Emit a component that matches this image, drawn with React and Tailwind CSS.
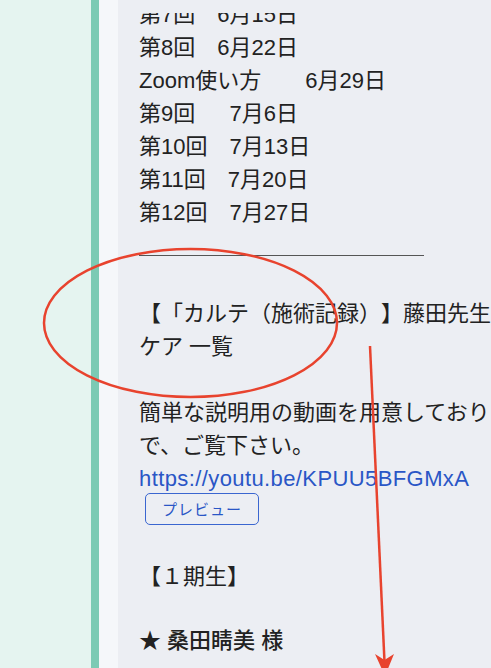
import React from "react";

const FONT = { fontFamily: '"Liberation Sans", "Noto Sans CJK JP", sans-serif' };

const schedule = [
  "第7回　6月15日",
  "第8回　6月22日",
  "Zoom使い方　　6月29日",
  "第9回　  7月6日",
  "第10回　7月13日",
  "第11回　7月20日",
  "第12回　7月27日",
];

const Line = ({ children, className = "" }) => (
  <div className={"h-[33px] whitespace-pre " + className}>{children}</div>
);

// red marker drawn on top of the screenshot
const Annotation = () => (
  <svg
    className="absolute inset-0 pointer-events-none"
    width="491"
    height="668"
    viewBox="0 0 491 668"
  >
    <ellipse cx="190.5" cy="323" rx="146.5" ry="74" fill="none" stroke="#e8432e" strokeWidth="2.5" />
    <line x1="370" y1="346" x2="384.5" y2="662" stroke="#e8432e" strokeWidth="2.5" />
    <polygon points="375,654 384.5,660 394,654 385,676" fill="#e8432e" />
  </svg>
);

export default function App() {
  return (
    <div className="relative w-[491px] h-[668px] overflow-hidden flex bg-[#e5f4f0]" style={FONT}>
      <div className="w-[91px] shrink-0 bg-[#e5f4f0]" />
      <div className="w-[8px] shrink-0 bg-[#7ccab4]" />
      <div className="w-[19px] shrink-0 bg-[#f5f7fa]" />
      <div className="flex-1 bg-[#eceef3] pt-[13px] pl-[21px] text-[22px] leading-[33px] text-[#222] [text-spacing-trim:space-all] overflow-hidden">
        <div className="h-full overflow-hidden">
          <div className="-mt-[15px] w-[600px]">
            {schedule.map((s) => (
              <Line key={s}>{s}</Line>
            ))}
            <div className="mt-[26px] w-[285px] border-t border-[#555]" />
            <div className="h-[41px]" />
            <Line>【「カルテ（施術記録）】藤田先生</Line>
            <Line>ケア 一覧</Line>
            <Line />
            <Line>簡単な説明用の動画を用意しており</Line>
            <Line>で、ご覧下さい。</Line>
            <Line className="text-[#2a56c6] tracking-[0.4px]">https://youtu.be/KPUU5BFGMxA</Line>
            <div className="-mt-[2px] ml-[6px] w-[114px] h-[32px] rounded-[5px] border-[1.5px] border-[#3a66d0] text-[#2a56c6] text-[15px] leading-none flex items-center justify-center tracking-[1px]">
              プレビュー
            </div>
            <div className="h-[35px]" />
            <Line>【１期生】</Line>
            <div className="h-[31px]" />
            <Line className="font-medium">★ 桑田睛美 様</Line>
          </div>
        </div>
      </div>
      <Annotation />
    </div>
  );
}
